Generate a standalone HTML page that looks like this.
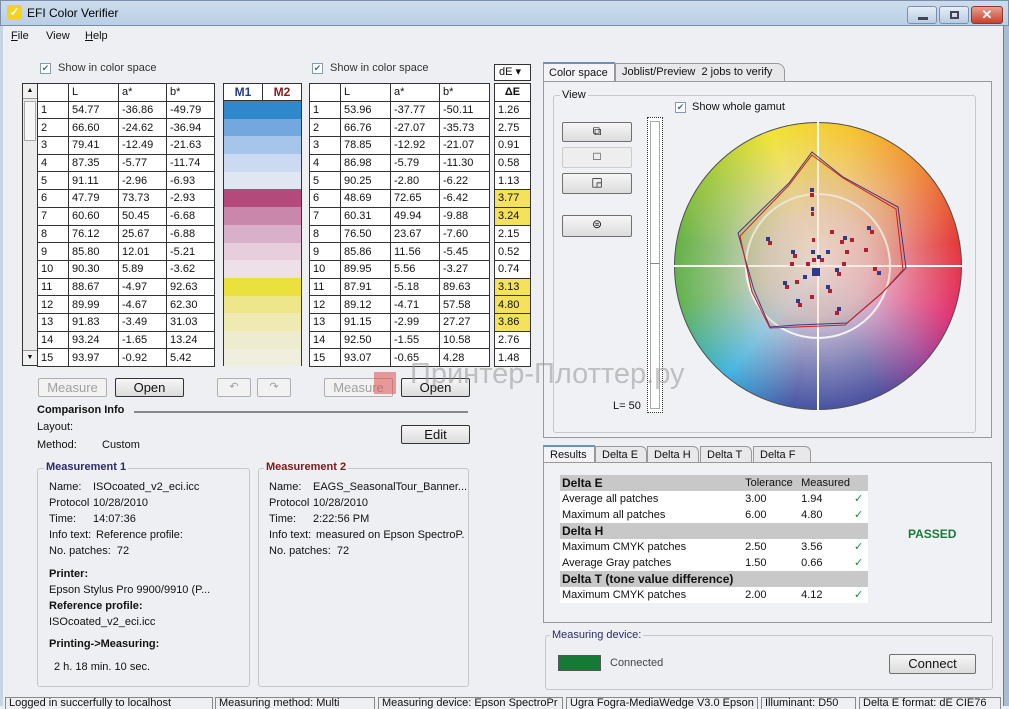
<!DOCTYPE html>
<html><head><meta charset="utf-8"><style>
*{box-sizing:border-box;margin:0;padding:0}
body{width:1009px;height:706px;overflow:hidden;background:#eeeff2;font-family:"Liberation Sans",sans-serif;font-size:11px;color:#111;position:relative}
.a{position:absolute}
.tb{border-collapse:collapse;position:absolute;background:#fff;font-size:11px}
.tb td{border:1px solid #333;height:17.7px;padding:0 3px;line-height:16px;white-space:nowrap}
.btn{position:absolute;border:1px solid #707070;border-radius:2px;background:linear-gradient(#f6f6f6,#dcdcdc);text-align:center;font-size:13px;line-height:17px}
.dis{color:#a0a0a0;border-color:#b0b0b0;background:#f2f2f2}
.cb{position:absolute;width:11px;height:11px;border:1px solid #8a9aae;background:#fff;color:#3a6fb0;font-size:9px;line-height:9px;text-align:center}
.grp{position:absolute;border:1px solid #c8c8cc;border-radius:3px}
.sb{position:absolute;top:697px;height:12px;border:1px solid #888;border-bottom:none;font-size:11px;line-height:11px;padding-left:3px;white-space:nowrap;overflow:hidden}
.rt td{padding:0 2px;height:16px;line-height:16px;white-space:nowrap}
</style></head><body>
<div class="a" style="left:0;top:0;width:1009px;height:26px;background:linear-gradient(#cddcec,#b9cfe6);border:1px solid #7a8ea8"></div>
<div class="a" style="left:7px;top:5px;width:15px;height:15px;background:#f3d41a;border-radius:2px;color:#fff;font-size:12px;line-height:14px;text-align:center;font-weight:bold">✓</div>
<div class="a" style="left:27px;top:6px;font-size:12px;color:#000">EFI Color Verifier</div>
<div class="a" style="left:907px;top:6px;width:30px;height:18px;border:1px solid #7b8fa8;border-radius:3px;background:linear-gradient(#e6eef8,#b8cce2)"><div class="a" style="left:10px;top:10px;width:10px;height:3px;background:#445"></div></div>
<div class="a" style="left:939px;top:6px;width:30px;height:18px;border:1px solid #7b8fa8;border-radius:3px;background:linear-gradient(#e6eef8,#b8cce2)"><div class="a" style="left:10px;top:4px;width:9px;height:8px;border:2px solid #445"></div></div>
<div class="a" style="left:971px;top:6px;width:32px;height:18px;border:1px solid #8a3a30;border-radius:3px;background:linear-gradient(#e8a090,#c8402c);color:#fff;font-weight:bold;font-size:13px;line-height:16px;text-align:center">✕</div>
<div class="a" style="left:1003px;top:26px;width:6px;height:680px;background:#a8bcd4;border-left:1px solid #6a7e98"></div>
<div class="a" style="left:0;top:26px;width:3px;height:680px;background:#c6d5e6"></div>
<div class="a" style="left:11px;top:30px;font-size:11px"><u>F</u>ile</div>
<div class="a" style="left:46px;top:30px;font-size:11px">View</div>
<div class="a" style="left:85px;top:30px;font-size:11px"><u>H</u>elp</div>

<div class="cb" style="left:40px;top:63px">✔</div><div class="a" style="left:58px;top:62px;color:#333">Show in color space</div>
<div class="cb" style="left:312px;top:63px">✔</div><div class="a" style="left:330px;top:62px;color:#333">Show in color space</div>

<div class="a" style="left:22px;top:83px;width:16px;height:283px;background:#eaeaea;border:1px solid #333"></div>
<div class="a" style="left:23px;top:84px;width:14px;height:15px;background:#f0f0f0;border-bottom:1px solid #999;font-size:7px;text-align:center;line-height:14px">▲</div>
<div class="a" style="left:24px;top:101px;width:12px;height:40px;border:1px solid #aaa;background:#f6f6f6"></div>
<div class="a" style="left:23px;top:350px;width:14px;height:15px;background:#f0f0f0;border-top:1px solid #999;font-size:7px;text-align:center;line-height:14px">▼</div>

<table class="tb" style="left:37px;top:83px;width:178px">
<tr><td style="width:31px"></td><td style="width:50px">L</td><td style="width:48px">a*</td><td>b*</td></tr>
<tr><td>1</td><td>54.77</td><td>-36.86</td><td>-49.79</td></tr>
<tr><td>2</td><td>66.60</td><td>-24.62</td><td>-36.94</td></tr>
<tr><td>3</td><td>79.41</td><td>-12.49</td><td>-21.63</td></tr>
<tr><td>4</td><td>87.35</td><td>-5.77</td><td>-11.74</td></tr>
<tr><td>5</td><td>91.11</td><td>-2.96</td><td>-6.93</td></tr>
<tr><td>6</td><td>47.79</td><td>73.73</td><td>-2.93</td></tr>
<tr><td>7</td><td>60.60</td><td>50.45</td><td>-6.68</td></tr>
<tr><td>8</td><td>76.12</td><td>25.67</td><td>-6.88</td></tr>
<tr><td>9</td><td>85.80</td><td>12.01</td><td>-5.21</td></tr>
<tr><td>10</td><td>90.30</td><td>5.89</td><td>-3.62</td></tr>
<tr><td>11</td><td>88.67</td><td>-4.97</td><td>92.63</td></tr>
<tr><td>12</td><td>89.99</td><td>-4.67</td><td>62.30</td></tr>
<tr><td>13</td><td>91.83</td><td>-3.49</td><td>31.03</td></tr>
<tr><td>14</td><td>93.24</td><td>-1.65</td><td>13.24</td></tr>
<tr><td>15</td><td>93.97</td><td>-0.92</td><td>5.42</td></tr>
</table>

<div class="a" style="left:223px;top:83px;width:79px;height:283px;border:1px solid #333;background:#fff">
<div style="display:flex;height:17px;border-bottom:1px solid #333;font-weight:bold;font-size:12px;line-height:17px"><div style="flex:1;text-align:center;color:#223a8a;border-right:1px solid #333">M1</div><div style="flex:1;text-align:center;color:#8a1a1a">M2</div></div>
<div style="height:17.7px;background:#2f88cc"></div><div style="height:17.7px;background:#72a8de"></div><div style="height:17.7px;background:#a6c5ea"></div><div style="height:17.7px;background:#cbdaf0"></div><div style="height:17.7px;background:#e0e7f3"></div>
<div style="height:17.7px;background:#b44a7c"></div><div style="height:17.7px;background:#c987ac"></div><div style="height:17.7px;background:#d9b0ca"></div><div style="height:17.7px;background:#e6cedc"></div><div style="height:17.7px;background:#ede0e8"></div>
<div style="height:17.7px;background:#ebe13c"></div><div style="height:17.7px;background:#ede68a"></div><div style="height:17.7px;background:#eeeab2"></div><div style="height:17.7px;background:#eeecce"></div><div style="height:17.7px;background:#efeedf"></div>
</div>

<table class="tb" style="left:309px;top:83px;width:181px">
<tr><td style="width:31px"></td><td style="width:50px">L</td><td style="width:49px">a*</td><td>b*</td></tr>
<tr><td>1</td><td>53.96</td><td>-37.77</td><td>-50.11</td></tr>
<tr><td>2</td><td>66.76</td><td>-27.07</td><td>-35.73</td></tr>
<tr><td>3</td><td>78.85</td><td>-12.92</td><td>-21.07</td></tr>
<tr><td>4</td><td>86.98</td><td>-5.79</td><td>-11.30</td></tr>
<tr><td>5</td><td>90.25</td><td>-2.80</td><td>-6.22</td></tr>
<tr><td>6</td><td>48.69</td><td>72.65</td><td>-6.42</td></tr>
<tr><td>7</td><td>60.31</td><td>49.94</td><td>-9.88</td></tr>
<tr><td>8</td><td>76.50</td><td>23.67</td><td>-7.60</td></tr>
<tr><td>9</td><td>85.86</td><td>11.56</td><td>-5.45</td></tr>
<tr><td>10</td><td>89.95</td><td>5.56</td><td>-3.27</td></tr>
<tr><td>11</td><td>87.91</td><td>-5.18</td><td>89.63</td></tr>
<tr><td>12</td><td>89.12</td><td>-4.71</td><td>57.58</td></tr>
<tr><td>13</td><td>91.15</td><td>-2.99</td><td>27.27</td></tr>
<tr><td>14</td><td>92.50</td><td>-1.55</td><td>10.58</td></tr>
<tr><td>15</td><td>93.07</td><td>-0.65</td><td>4.28</td></tr>
</table>

<div class="a" style="left:494px;top:64px;width:37px;height:17px;border:1px solid #333;background:#fff;font-size:11px;line-height:15px;padding-left:4px">dE ▾</div>
<table class="tb" style="left:494px;top:83px;width:37px">
<tr><td style="text-align:center;font-weight:bold">ΔE</td></tr>
<tr><td>1.26</td></tr><tr><td>2.75</td></tr><tr><td>0.91</td></tr><tr><td>0.58</td></tr><tr><td>1.13</td></tr>
<tr><td style="background:#f4e25c">3.77</td></tr><tr><td style="background:#f4e25c">3.24</td></tr><tr><td>2.15</td></tr><tr><td>0.52</td></tr><tr><td>0.74</td></tr>
<tr><td style="background:#f4e25c">3.13</td></tr><tr><td style="background:#f4e25c">4.80</td></tr><tr><td style="background:#f4e25c">3.86</td></tr><tr><td>2.76</td></tr><tr><td>1.48</td></tr>
</table>

<div class="btn dis" style="left:38px;top:378px;width:69px;height:19px">Measure</div>
<div class="btn" style="left:115px;top:378px;width:69px;height:19px;border-color:#333">Open</div>
<div class="btn dis" style="left:217px;top:378px;width:34px;height:19px;font-size:11px">↶</div>
<div class="btn dis" style="left:257px;top:378px;width:34px;height:19px;font-size:11px">↷</div>
<div class="btn dis" style="left:324px;top:378px;width:69px;height:19px">Measure</div>
<div class="btn" style="left:401px;top:378px;width:69px;height:19px;border-color:#333">Open</div>

<div class="a" style="left:37px;top:404px;font-weight:bold;font-size:11px">Comparison Info</div>
<div class="a" style="left:134px;top:411px;width:334px;height:2px;background:#888"></div>
<div class="a" style="left:37px;top:421px">Layout:</div>
<div class="a" style="left:37px;top:439px">Method:</div><div class="a" style="left:102px;top:439px">Custom</div>
<div class="btn" style="left:401px;top:425px;width:69px;height:19px;border-color:#333">Edit</div>

<div class="grp" style="left:37px;top:468px;width:213px;height:219px"></div>
<div class="a" style="left:44px;top:461px;background:#eeeff2;padding:0 2px;font-weight:bold;color:#2a2a6a">Measurement 1</div>
<div class="a" style="left:49px;top:479px;line-height:16px;font-size:11px">Name:<br>Protocol<br>Time:<br>Info text:<br>No. patches:&nbsp; 72</div>
<div class="a" style="left:93px;top:479px;line-height:16px;font-size:11px">ISOcoated_v2_eci.icc<br>10/28/2010<br>14:07:36<br>&nbsp;Reference profile:</div>
<div class="a" style="left:49px;top:568px;font-weight:bold">Printer:</div>
<div class="a" style="left:49px;top:584px">Epson Stylus Pro 9900/9910 (P...</div>
<div class="a" style="left:49px;top:600px;font-weight:bold">Reference profile:</div>
<div class="a" style="left:49px;top:616px">ISOcoated_v2_eci.icc</div>
<div class="a" style="left:49px;top:638px;font-weight:bold">Printing-&gt;Measuring:</div>
<div class="a" style="left:54px;top:661px">2 h. 18 min. 10 sec.</div>

<div class="grp" style="left:258px;top:468px;width:211px;height:219px"></div>
<div class="a" style="left:264px;top:461px;background:#eeeff2;padding:0 2px;font-weight:bold;color:#7a1a1a">Measurement 2</div>
<div class="a" style="left:269px;top:479px;line-height:16px">Name:<br>Protocol<br>Time:<br>Info text:<br>No. patches:&nbsp; 72</div>
<div class="a" style="left:313px;top:479px;line-height:16px">EAGS_SeasonalTour_Banner...<br>10/28/2010<br>2:22:56 PM<br>&nbsp;measured on Epson SpectroP.</div>

<div class="a" style="left:543px;top:62px;width:72px;height:20px;border:1px solid #999;border-bottom:none;border-top:2px solid #6a8fc0;background:#f4f4f6;padding:3px 5px">Color space</div>
<div class="a" style="left:615px;top:63px;width:170px;height:18px;border:1px solid #999;border-bottom:none;border-radius:0 8px 0 0;background:#e8e8ea;padding:2px 6px">Joblist/Preview&nbsp; 2 jobs to verify</div>
<div class="a" style="left:543px;top:81px;width:449px;height:357px;border:1px solid #999;background:#f0f1f4"></div>
<div class="grp" style="left:553px;top:95px;width:423px;height:338px"></div>
<div class="a" style="left:560px;top:89px;background:#f0f1f4;padding:0 2px">View</div>
<div class="cb" style="left:675px;top:102px">✔</div><div class="a" style="left:692px;top:101px">Show whole gamut</div>
<div class="btn" style="left:562px;top:122px;width:70px;height:20px;font-size:12px">⧉</div>
<div class="btn" style="left:562px;top:147px;width:70px;height:21px;background:#eee;border-color:#ccc;font-size:12px">□</div>
<div class="btn" style="left:562px;top:173px;width:70px;height:21px;font-size:12px">◲</div>
<div class="btn" style="left:562px;top:215px;width:70px;height:22px;font-size:12px">⊜</div>
<div class="a" style="left:647px;top:117px;width:16px;height:296px;border:1px dotted #333;background:#fff"><div class="a" style="left:2px;top:3px;width:10px;height:288px;border:1px solid #aaa"></div><div class="a" style="left:2px;top:145px;width:10px;height:5px;border-top:1px solid #888"></div></div>
<div class="a" style="left:613px;top:400px">L= 50</div>

<div class="a" style="left:674px;top:122px;width:288px;height:288px;border-radius:50%;background:conic-gradient(from -20deg,#f2e424 0deg,#f8c020 35deg,#f08828 65deg,#e52a2a 100deg,#e22468 130deg,#a03a90 150deg,#40459a 175deg,#3a4a9e 210deg,#30b0e0 240deg,#58b048 275deg,#5aae38 300deg,#9cc830 330deg,#f2e424 360deg);border:1px solid #444"></div>
<div class="a" style="left:674px;top:122px;width:288px;height:288px;border-radius:50%;background:radial-gradient(circle,rgba(240,225,230,1) 0%,rgba(235,215,225,.85) 25%,rgba(230,220,225,.4) 50%,rgba(255,255,255,0) 75%)"></div>
<svg class="a" style="left:0;top:0" width="1009" height="706">
<line x1="818" y1="122" x2="818" y2="410" stroke="#fff" stroke-width="2"/>
<line x1="674" y1="266" x2="962" y2="266" stroke="#fff" stroke-width="2"/>
<circle cx="818" cy="266" r="72" fill="none" stroke="#f4f4f4" stroke-width="2"/>
<polygon points="812,152 843,177 898,207 906,268 883,292 847,323 797,325 770,327 754,290 738,233 789,183" fill="rgba(200,140,60,.15)" stroke="#3a3a8a" stroke-width="1"/>
<polygon points="812,155 843,178 896,209 903,270 881,294 845,325 797,327 770,328 752,292 740,236 789,185" fill="none" stroke="#d02020" stroke-width="1"/>
<g fill="#b02030">
<rect x="810" y="193" width="4" height="4"/><rect x="811" y="212" width="3" height="4"/><rect x="812" y="238" width="3" height="4"/><rect x="812" y="258" width="4" height="4"/><rect x="806" y="262" width="4" height="4"/><rect x="820" y="258" width="4" height="4"/><rect x="840" y="240" width="4" height="4"/><rect x="845" y="250" width="4" height="4"/><rect x="870" y="230" width="4" height="4"/><rect x="864" y="248" width="4" height="4"/><rect x="768" y="241" width="4" height="4"/><rect x="793" y="254" width="4" height="4"/><rect x="785" y="285" width="4" height="4"/><rect x="790" y="262" width="4" height="4"/><rect x="828" y="289" width="4" height="4"/><rect x="837" y="272" width="4" height="4"/><rect x="842" y="262" width="4" height="4"/><rect x="873" y="267" width="4" height="4"/><rect x="798" y="303" width="4" height="4"/><rect x="835" y="311" width="4" height="4"/><rect x="795" y="280" width="4" height="4"/><rect x="810" y="295" width="4" height="4"/><rect x="830" y="230" width="4" height="4"/><rect x="850" y="238" width="4" height="4"/></g>
<g fill="#303a8a">
<rect x="810" y="188" width="4" height="4"/><rect x="811" y="207" width="3" height="4"/><rect x="811" y="250" width="4" height="4"/><rect x="812" y="268" width="8" height="8"/><rect x="817" y="255" width="4" height="4"/><rect x="843" y="236" width="4" height="4"/><rect x="867" y="226" width="4" height="4"/><rect x="766" y="237" width="4" height="4"/><rect x="791" y="250" width="4" height="4"/><rect x="783" y="281" width="4" height="4"/><rect x="826" y="285" width="4" height="4"/><rect x="835" y="268" width="4" height="4"/><rect x="877" y="271" width="4" height="4"/><rect x="796" y="299" width="4" height="4"/><rect x="837" y="307" width="4" height="4"/><rect x="803" y="275" width="4" height="4"/><rect x="826" y="250" width="4" height="4"/></g>
</svg>

<div class="a" style="left:543px;top:445px;width:52px;height:18px;border:1px solid #999;border-bottom:none;border-top:2px solid #6a8fc0;background:#f4f4f6;padding:2px 6px">Results</div>
<div class="a" style="left:595px;top:446px;width:52px;height:17px;border:1px solid #999;border-bottom:none;border-radius:0 6px 0 0;background:#e8e8ea;padding:2px 6px">Delta E</div>
<div class="a" style="left:647px;top:446px;width:52px;height:17px;border:1px solid #999;border-bottom:none;border-radius:0 6px 0 0;background:#e8e8ea;padding:2px 6px">Delta H</div>
<div class="a" style="left:700px;top:446px;width:52px;height:17px;border:1px solid #999;border-bottom:none;border-radius:0 6px 0 0;background:#e8e8ea;padding:2px 6px">Delta T</div>
<div class="a" style="left:753px;top:446px;width:58px;height:17px;border:1px solid #999;border-bottom:none;border-radius:0 6px 0 0;background:#e8e8ea;padding:2px 6px">Delta F</div>
<div class="a" style="left:543px;top:462px;width:449px;height:161px;border:1px solid #999;background:#f0f1f4"></div>
<table class="a rt" style="left:560px;top:475px;width:308px;border-collapse:collapse;font-size:11px">
<tr style="background:#c8c8c8"><td style="font-weight:bold;font-size:12px">Delta E</td><td style="width:56px">Tolerance</td><td style="width:52px">Measured</td><td style="width:16px"></td></tr>
<tr style="background:#fff"><td>Average all patches</td><td>3.00</td><td>1.94</td><td style="color:#1a8a3a">✓</td></tr>
<tr style="background:#fff"><td>Maximum all patches</td><td>6.00</td><td>4.80</td><td style="color:#1a8a3a">✓</td></tr>
<tr style="background:#c8c8c8"><td style="font-weight:bold;font-size:12px" colspan="4">Delta H</td></tr>
<tr style="background:#fff"><td>Maximum CMYK patches</td><td>2.50</td><td>3.56</td><td style="color:#1a8a3a">✓</td></tr>
<tr style="background:#fff"><td>Average Gray patches</td><td>1.50</td><td>0.66</td><td style="color:#1a8a3a">✓</td></tr>
<tr style="background:#c8c8c8"><td style="font-weight:bold;font-size:12px" colspan="4">Delta T (tone value difference)</td></tr>
<tr style="background:#fff"><td>Maximum CMYK patches</td><td>2.00</td><td>4.12</td><td style="color:#1a8a3a">✓</td></tr>
</table>
<div class="a" style="left:908px;top:527px;font-weight:bold;color:#1a7a3a;font-size:12px">PASSED</div>

<div class="grp" style="left:545px;top:635px;width:448px;height:55px"></div>
<div class="a" style="left:550px;top:629px;background:#eeeff2;padding:0 2px;color:#2a2a6a">Measuring device:</div>
<div class="a" style="left:558px;top:655px;width:43px;height:16px;background:#167a36;border:1px solid #555"></div>
<div class="a" style="left:610px;top:657px;color:#444">Connected</div>
<div class="btn" style="left:889px;top:654px;width:87px;height:20px;font-size:13px;line-height:18px">Connect</div>

<div class="sb" style="left:5px;width:208px">Logged in succerfully to localhost</div>
<div class="sb" style="left:215px;width:160px">Measuring method: Multi</div>
<div class="sb" style="left:378px;width:185px">Measuring device: Epson SpectroPr</div>
<div class="sb" style="left:566px;width:192px">Ugra Fogra-MediaWedge V3.0 Epson</div>
<div class="sb" style="left:761px;width:95px">Illuminant: D50</div>
<div class="sb" style="left:859px;width:142px">Delta E format: dE CIE76</div>

<div class="a" style="left:374px;top:372px;width:22px;height:22px;background:rgba(220,80,80,.55)"></div>
<div class="a" style="left:410px;top:358px;font-size:29px;color:rgba(150,150,150,.55);white-space:nowrap">Принтер-Плоттер.ру</div>
</body></html>
